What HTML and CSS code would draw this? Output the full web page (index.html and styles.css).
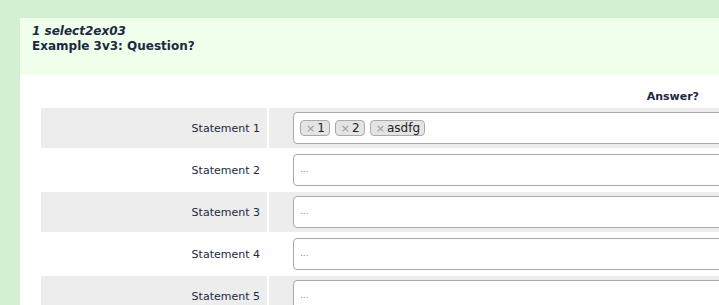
FILE: index.html
```html
<!DOCTYPE html>
<html>
<head>
<meta charset="utf-8">
<link rel="stylesheet" href="styles.css">
</head>
<body>
<div class="page">
  <div class="panel">
    <div class="qhead">
      <div class="qname">1 select2ex03</div>
      <div class="qtext">Example 3v3: Question?</div>
    </div>
    <div class="qbody">
      <table class="matrix">
        <thead>
          <tr><th class="blank"></th><th class="anshead">Answer?</th></tr>
        </thead>
        <tbody>
          <tr class="odd">
            <td class="label">Statement 1</td>
            <td class="answer"><div class="select multi">
              <span class="tag"><span class="x">×</span>1</span>
              <span class="tag"><span class="x">×</span>2</span>
              <span class="tag"><span class="x">×</span>asdfg</span>
            </div></td>
          </tr>
          <tr>
            <td class="label">Statement 2</td>
            <td class="answer"><div class="select"><span class="ph">...</span></div></td>
          </tr>
          <tr class="odd">
            <td class="label">Statement 3</td>
            <td class="answer"><div class="select"><span class="ph">...</span></div></td>
          </tr>
          <tr>
            <td class="label">Statement 4</td>
            <td class="answer"><div class="select"><span class="ph">...</span></div></td>
          </tr>
          <tr class="odd">
            <td class="label">Statement 5</td>
            <td class="answer"><div class="select"><span class="ph">...</span></div></td>
          </tr>
        </tbody>
      </table>
    </div>
  </div>
</div>
</body>
</html>
```

FILE: styles.css
```css
html, body {
  margin: 0;
  padding: 0;
  overflow: hidden;
}
body {
  background: #d3f0d3;
  font-family: "DejaVu Sans", Verdana, sans-serif;
  font-size: 11px;
  color: #1c2940;
}
.page {
  padding: 18px 0 0 20px;
  height: 305px;
  box-sizing: border-box;
  overflow: hidden;
}
.panel {
  background: #fff;
  width: 800px;
  height: 400px;
}
.qhead {
  background: #efffec;
  height: 57px;
  box-sizing: border-box;
  padding: 6px 12px;
  font-size: 12px;
  font-weight: bold;
  line-height: 15px;
}
.qname {
  font-style: italic;
}
.qbody {
  padding: 9px 0 0 19px;
}
.matrix {
  border-collapse: separate;
  border-spacing: 2px;
  width: 760px;
}
.matrix th {
  height: 20px;
  padding: 0;
  font-weight: bold;
  font-size: 11px;
}
.matrix th.anshead {
  text-align: right;
  padding-right: 98px;
}
.matrix td {
  padding: 0;
  height: 40px;
  vertical-align: middle;
}
.matrix tr.odd td {
  background: #ededed;
}
.matrix td.label {
  width: 219px;
  padding-right: 7px;
  text-align: right;
}
.matrix td.answer {
  padding: 0 0 0 24px;
}
.select {
  height: 32px;
  box-sizing: border-box;
  border: 1px solid #aaa;
  border-radius: 4px;
  background: #fff;
  display: flex;
  align-items: center;
  padding-left: 6px;
  gap: 5px;
}
.tag {
  display: inline-flex;
  align-items: center;
  height: 16px;
  box-sizing: border-box;
  background: #e4e4e4;
  border: 1px solid #aaa;
  border-radius: 4px;
  padding: 0 4px 0 5px;
  font-size: 12px;
  color: #222;
}
.tag .x {
  color: #999;
  margin-right: 2px;
  font-size: 11px;
}
.ph {
  color: #8a80a8;
  font-size: 9px;
  margin-bottom: 3px;
}
```
